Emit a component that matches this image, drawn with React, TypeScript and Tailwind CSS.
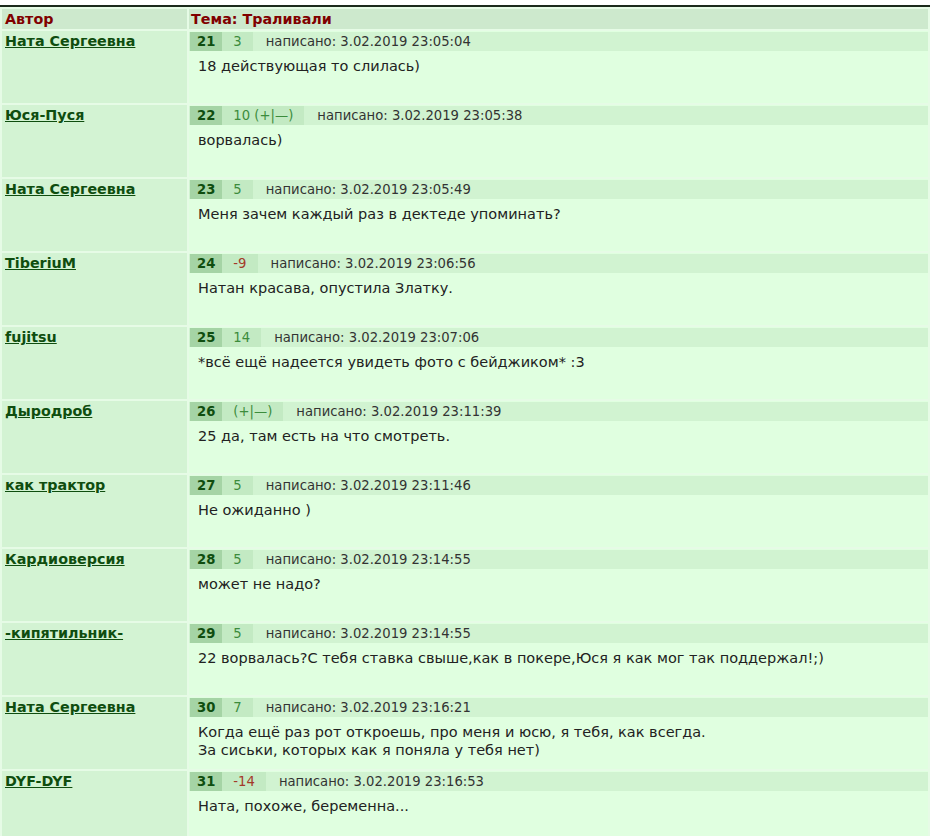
const posts = [
  { n: 21, author: 'Ната Сергеевна', rate: '3', kind: 'pos', date: '3.02.2019 23:05:04', text: ['18 действующая то слилась)'] },
  { n: 22, author: 'Юся-Пуся', rate: '10 (+|—)', kind: 'pos', date: '3.02.2019 23:05:38', text: ['ворвалась)'] },
  { n: 23, author: 'Ната Сергеевна', rate: '5', kind: 'pos', date: '3.02.2019 23:05:49', text: ['Меня зачем каждый раз в дектеде упоминать?'] },
  { n: 24, author: 'TiberiuM', rate: '-9', kind: 'neg', date: '3.02.2019 23:06:56', text: ['Натан красава, опустила Златку.'] },
  { n: 25, author: 'fujitsu', rate: '14', kind: 'pos', date: '3.02.2019 23:07:06', text: ['*всё ещё надеется увидеть фото с бейджиком* :3'] },
  { n: 26, author: 'Дыродроб', rate: '(+|—)', kind: 'pos', date: '3.02.2019 23:11:39', text: ['25 да, там есть на что смотреть.'] },
  { n: 27, author: 'как трактор', rate: '5', kind: 'pos', date: '3.02.2019 23:11:46', text: ['Не ожиданно )'] },
  { n: 28, author: 'Кардиоверсия', rate: '5', kind: 'pos', date: '3.02.2019 23:14:55', text: ['может не надо?'] },
  { n: 29, author: '-кипятильник-', rate: '5', kind: 'pos', date: '3.02.2019 23:14:55', text: ['22 ворвалась?С тебя ставка свыше,как в покере,Юся я как мог так поддержал!;)'] },
  { n: 30, author: 'Ната Сергеевна', rate: '7', kind: 'pos', date: '3.02.2019 23:16:21', text: ['Когда ещё раз рот откроешь, про меня и юсю, я тебя, как всегда.', 'За сиськи, которых как я поняла у тебя нет)'] },
  { n: 31, author: 'DYF-DYF', rate: '-14', kind: 'neg', date: '3.02.2019 23:16:53', text: ['Ната, похоже, беременна...'] },
];

export default function App() {
  return (
    <div className="bg-white pt-[5px] font-['DejaVu_Sans',Verdana,sans-serif]">
      <div className="border-t-2 border-[#1c2a1c]">
        <table className="w-full border-separate border-spacing-[2px] bg-[#e6fbe6]">
          <thead>
            <tr>
              <th className="w-[185px] bg-[#cde9cd] px-[3px] py-[1px] text-left text-[14.3px] leading-[18px] font-bold text-[#800000]">Автор</th>
              <th className="bg-[#cde9cd] px-[2px] py-[1px] text-left text-[14.3px] leading-[18px] font-bold text-[#800000]">Тема: Траливали</th>
            </tr>
          </thead>
          <tbody>
            {posts.map((p) => (
              <tr key={p.n}>
                <td className="h-[72px] bg-[#d3f3d3] px-[3px] pt-[1px] align-top text-[14.3px] leading-[19px]">
                  <a href="#" className="font-bold text-[#0f4d0f] underline">{p.author}</a>
                </td>
                <td className="h-[72px] bg-[#e0ffe0] p-0 align-top">
                  <div className="flex items-stretch bg-[#d1f3d1] text-[13.2px] leading-[19px] mt-[1px]">
                    <span className="bg-[#a5d4a5] px-[7px] font-bold text-[#0f4d0f] ml-[1px]">{p.n}</span>
                    <span className={'bg-[#c3eac3] px-[11px] ' + (p.kind === 'neg' ? 'text-[#a33a2a]' : 'text-[#3c8c3c]')}>{p.rate}</span>
                    <span className="pl-[13px] text-[#333]">написано: {p.date}</span>
                  </div>
                  <div className="px-[9px] pt-[6px] text-[14.5px] leading-[18px] text-[#222]">
                    {p.text.map((t, i) => (
                      <div key={i}>{t}</div>
                    ))}
                  </div>
                </td>
              </tr>
            ))}
          </tbody>
        </table>
      </div>
    </div>
  );
}
